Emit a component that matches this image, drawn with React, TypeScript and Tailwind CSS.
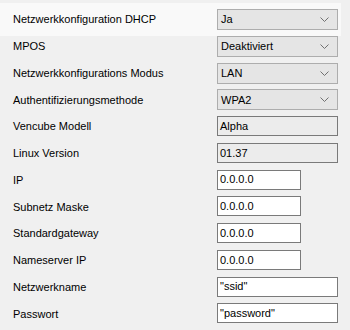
import React from "react";

const Chevron = () => (
  <svg width="9" height="5" viewBox="0 0 9 5" className="shrink-0">
    <path d="M0.5 0.5 L4.5 4.5 L8.5 0.5" fill="none" stroke="#707070" strokeWidth="1" />
  </svg>
);

type Ctrl =
  | { kind: "select"; value: string }
  | { kind: "ro"; value: string }
  | { kind: "text"; value: string; short?: boolean };

const rows: { label: string; ctrl: Ctrl }[] = [
  { label: "Netzwerkkonfiguration DHCP", ctrl: { kind: "select", value: "Ja" } },
  { label: "MPOS", ctrl: { kind: "select", value: "Deaktiviert" } },
  { label: "Netzwerkkonfigurations Modus", ctrl: { kind: "select", value: "LAN" } },
  { label: "Authentifizierungsmethode", ctrl: { kind: "select", value: "WPA2" } },
  { label: "Vencube Modell", ctrl: { kind: "ro", value: "Alpha" } },
  { label: "Linux Version", ctrl: { kind: "ro", value: "01.37" } },
  { label: "IP", ctrl: { kind: "text", value: "0.0.0.0", short: true } },
  { label: "Subnetz Maske", ctrl: { kind: "text", value: "0.0.0.0", short: true } },
  { label: "Standardgateway", ctrl: { kind: "text", value: "0.0.0.0", short: true } },
  { label: "Nameserver IP", ctrl: { kind: "text", value: "0.0.0.0", short: true } },
  { label: "Netzwerkname", ctrl: { kind: "text", value: '"ssid"' } },
  { label: "Passwort", ctrl: { kind: "text", value: '"password"' } },
];

function Control({ c }: { c: Ctrl }) {
  if (c.kind === "select") {
    return (
      <div className="flex h-[21px] w-[121px] items-center justify-between border border-[#adadad] bg-[#e5e5e5] pl-[3px] pr-[8px]">
        <span>{c.value}</span>
        <Chevron />
      </div>
    );
  }
  if (c.kind === "ro") {
    return (
      <div className="flex h-[20px] w-[121px] items-center border border-[#7a7a7a] bg-[#ececec] pl-[2px]">
        <span>{c.value}</span>
      </div>
    );
  }
  return (
    <div
      className={
        c.short
          ? "flex h-[20px] w-[84px] items-center border border-[#7a7a7a] bg-white pl-[2px]"
          : "flex h-[20px] w-[121px] items-center border border-[#7a7a7a] bg-white pl-[2px]"
      }
    >
      <span>{c.value}</span>
    </div>
  );
}

export default function App() {
  return (
    <div
      className="h-[330px] w-[350px] bg-[#f0f0f0] pt-[3px] text-[11px] text-black"
      style={{ fontFamily: '"Liberation Sans", Arial, sans-serif' }}
    >
      {rows.map((r, i) => (
        <div
          key={r.label}
          className={
            i === 0
              ? "flex h-[32.75px] w-[341px] items-start bg-[#f9f9f9] pl-[13px] pt-[6px]"
              : "flex h-[26.75px] items-start pl-[13px]"
          }
        >
          <div className="flex h-[21px] w-[204px] items-center">{r.label}</div>
          <Control c={r.ctrl} />
        </div>
      ))}
    </div>
  );
}
